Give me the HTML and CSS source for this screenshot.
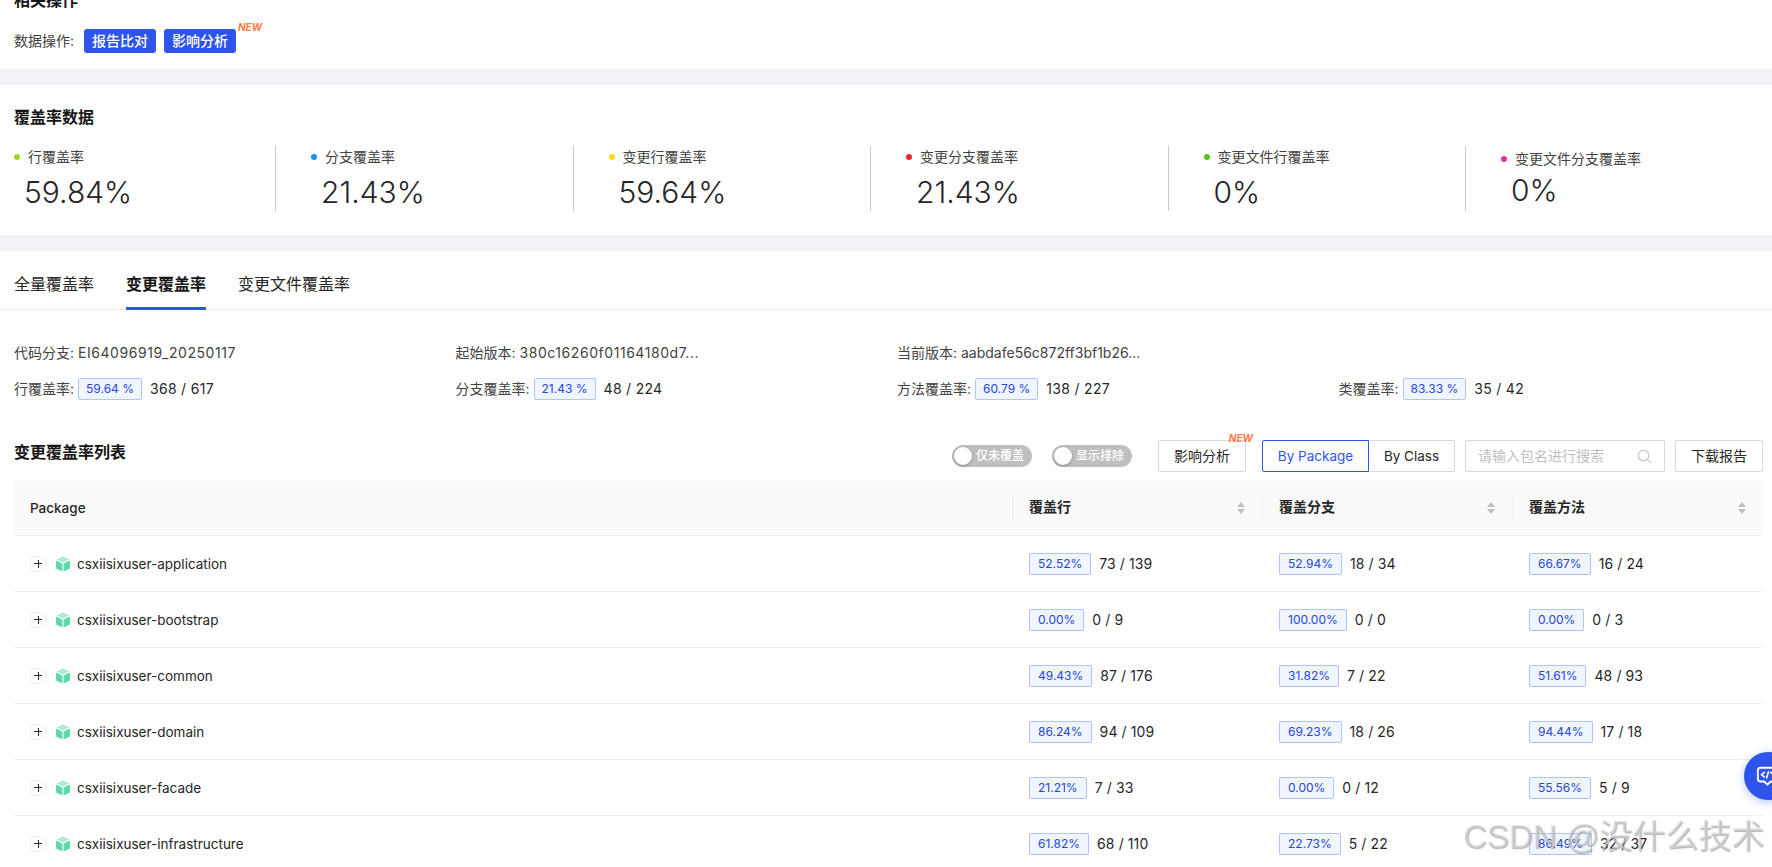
FILE: index.html
```html
<!DOCTYPE html>
<html lang="zh">
<head>
<meta charset="utf-8">
<title>覆盖率报告</title>
<link rel="stylesheet" href="styles.css">
</head>
<body>
<div class="page">
  <section class="panel ops">
    <h3 class="ops-title">相关操作</h3>
    <div class="ops-row">
      <span>数据操作:</span>
      <button class="primary">报告比对</button>
      <button class="primary new-host">影响分析<i class="new">NEW</i></button>
    </div>
  </section>
  <section class="panel cov">
    <h3 class="section-title">覆盖率数据</h3>
    <div class="stats">
      <div class="stat"><div class="stat-label"><b class="dot c1"></b>行覆盖率</div><div class="stat-num">59.84%</div></div>
      <div class="stat"><div class="stat-label"><b class="dot c2"></b>分支覆盖率</div><div class="stat-num">21.43%</div></div>
      <div class="stat"><div class="stat-label"><b class="dot c3"></b>变更行覆盖率</div><div class="stat-num">59.64%</div></div>
      <div class="stat"><div class="stat-label"><b class="dot c4"></b>变更分支覆盖率</div><div class="stat-num">21.43%</div></div>
      <div class="stat"><div class="stat-label"><b class="dot c5"></b>变更文件行覆盖率</div><div class="stat-num">0%</div></div>
      <div class="stat stat-last"><div class="stat-label"><b class="dot c6"></b>变更文件分支覆盖率</div><div class="stat-num">0%</div></div>
    </div>
  </section>
  <section class="panel detail">
    <nav class="tabs">
      <a>全量覆盖率</a>
      <a class="active">变更覆盖率</a>
      <a>变更文件覆盖率</a>
    </nav>
    <div class="info">
      <div>代码分支: <span class="val">EI64096919_20250117</span></div>
      <div>起始版本: <span class="val">380c16260f01164180d7...</span></div>
      <div>当前版本: <span class="val-tight">aabdafe56c872ff3bf1b26...</span></div>
      <div></div>
      <div class="info-item">行覆盖率: <span class="tag">59.64 %</span><span class="frac frac-wide">368 / 617</span></div>
      <div class="info-item">分支覆盖率: <span class="tag">21.43 %</span><span class="frac frac-wide">48 / 224</span></div>
      <div class="info-item">方法覆盖率: <span class="tag">60.79 %</span><span class="frac frac-wide">138 / 227</span></div>
      <div class="info-item">类覆盖率: <span class="tag">83.33 %</span><span class="frac frac-wide">35 / 42</span></div>
    </div>
    <div class="toolbar">
      <h3 class="list-title">变更覆盖率列表</h3>
      <div class="toggle"><b></b>仅未覆盖</div>
      <div class="toggle second"><b></b>显示排除</div>
      <button class="plain new-host impact">影响分析<i class="new">NEW</i></button>
      <div class="seg">
        <span class="seg-on">By Package</span><span class="seg-off">By Class</span>
      </div>
      <div class="search">
        <span>请输入包名进行搜索</span>
        <svg viewBox="0 0 16 16" width="15" height="15" fill="none" stroke="#bfbfbf" stroke-width="1.1"><circle cx="7" cy="7" r="5.6"/><path d="M11 11l4 4"/></svg>
      </div>
      <button class="plain download">下载报告</button>
    </div>
    <div class="table">
      <div class="row head">
        <div class="c-name">Package</div>
        <div class="c-val"><span>覆盖行</span><svg class="sort" viewBox="0 0 8 12" width="8" height="12"><path d="M4 0l4 5H0zM4 12L0 7h8z"/></svg></div>
        <div class="c-val"><span>覆盖分支</span><svg class="sort" viewBox="0 0 8 12" width="8" height="12"><path d="M4 0l4 5H0zM4 12L0 7h8z"/></svg></div>
        <div class="c-val"><span>覆盖方法</span><svg class="sort" viewBox="0 0 8 12" width="8" height="12"><path d="M4 0l4 5H0zM4 12L0 7h8z"/></svg></div>
      </div>
      <div class="row">
        <div class="c-name"><span class="plus"></span><svg class="cube" viewBox="0 0 16 16" width="16" height="16"><path class="cube-top" d="M8 .6l6.6 3L8 6.5 1.4 3.6z"/><path class="cube-side" d="M1 4.6l6.4 2.9V15.4L1 12.4zM15 4.6L8.6 7.5v7.9l6.4-3z"/></svg>csxiisixuser-application</div>
        <div class="c-cell"><span class="tag">52.52%</span><span class="frac">73 / 139</span></div>
        <div class="c-cell"><span class="tag">52.94%</span><span class="frac">18 / 34</span></div>
        <div class="c-cell"><span class="tag">66.67%</span><span class="frac">16 / 24</span></div>
      </div>
      <div class="row">
        <div class="c-name"><span class="plus"></span><svg class="cube" viewBox="0 0 16 16" width="16" height="16"><path class="cube-top" d="M8 .6l6.6 3L8 6.5 1.4 3.6z"/><path class="cube-side" d="M1 4.6l6.4 2.9V15.4L1 12.4zM15 4.6L8.6 7.5v7.9l6.4-3z"/></svg>csxiisixuser-bootstrap</div>
        <div class="c-cell"><span class="tag">0.00%</span><span class="frac">0 / 9</span></div>
        <div class="c-cell"><span class="tag">100.00%</span><span class="frac">0 / 0</span></div>
        <div class="c-cell"><span class="tag">0.00%</span><span class="frac">0 / 3</span></div>
      </div>
      <div class="row">
        <div class="c-name"><span class="plus"></span><svg class="cube" viewBox="0 0 16 16" width="16" height="16"><path class="cube-top" d="M8 .6l6.6 3L8 6.5 1.4 3.6z"/><path class="cube-side" d="M1 4.6l6.4 2.9V15.4L1 12.4zM15 4.6L8.6 7.5v7.9l6.4-3z"/></svg>csxiisixuser-common</div>
        <div class="c-cell"><span class="tag">49.43%</span><span class="frac">87 / 176</span></div>
        <div class="c-cell"><span class="tag">31.82%</span><span class="frac">7 / 22</span></div>
        <div class="c-cell"><span class="tag">51.61%</span><span class="frac">48 / 93</span></div>
      </div>
      <div class="row">
        <div class="c-name"><span class="plus"></span><svg class="cube" viewBox="0 0 16 16" width="16" height="16"><path class="cube-top" d="M8 .6l6.6 3L8 6.5 1.4 3.6z"/><path class="cube-side" d="M1 4.6l6.4 2.9V15.4L1 12.4zM15 4.6L8.6 7.5v7.9l6.4-3z"/></svg>csxiisixuser-domain</div>
        <div class="c-cell"><span class="tag">86.24%</span><span class="frac">94 / 109</span></div>
        <div class="c-cell"><span class="tag">69.23%</span><span class="frac">18 / 26</span></div>
        <div class="c-cell"><span class="tag">94.44%</span><span class="frac">17 / 18</span></div>
      </div>
      <div class="row">
        <div class="c-name"><span class="plus"></span><svg class="cube" viewBox="0 0 16 16" width="16" height="16"><path class="cube-top" d="M8 .6l6.6 3L8 6.5 1.4 3.6z"/><path class="cube-side" d="M1 4.6l6.4 2.9V15.4L1 12.4zM15 4.6L8.6 7.5v7.9l6.4-3z"/></svg>csxiisixuser-facade</div>
        <div class="c-cell"><span class="tag">21.21%</span><span class="frac">7 / 33</span></div>
        <div class="c-cell"><span class="tag">0.00%</span><span class="frac">0 / 12</span></div>
        <div class="c-cell"><span class="tag">55.56%</span><span class="frac">5 / 9</span></div>
      </div>
      <div class="row">
        <div class="c-name"><span class="plus"></span><svg class="cube" viewBox="0 0 16 16" width="16" height="16"><path class="cube-top" d="M8 .6l6.6 3L8 6.5 1.4 3.6z"/><path class="cube-side" d="M1 4.6l6.4 2.9V15.4L1 12.4zM15 4.6L8.6 7.5v7.9l6.4-3z"/></svg>csxiisixuser-infrastructure</div>
        <div class="c-cell"><span class="tag">61.82%</span><span class="frac">68 / 110</span></div>
        <div class="c-cell"><span class="tag">22.73%</span><span class="frac">5 / 22</span></div>
        <div class="c-cell"><span class="tag">86.49%</span><span class="frac">32 / 37</span></div>
      </div>
    </div>
  </section>
</div>
<div class="chat">
  <svg viewBox="0 0 24 24" width="22" height="22" fill="none" stroke="#fff" stroke-width="2" stroke-linecap="round" stroke-linejoin="round"><path d="M5 3h14a3 3 0 0 1 3 3v9a3 3 0 0 1-3 3h-3l-3.5 3.5L9 18H5a3 3 0 0 1-3-3V6a3 3 0 0 1 3-3z"/><path stroke-width="1.8" d="M9 8l-3 2.6L9 13M13.6 7.5L11.6 14M16 8l2 2"/></svg>
</div>
<div class="watermark">CSDN @没什么技术</div>
</body>
</html>
```
FILE: styles.css
```css
* { box-sizing: border-box; }
html, body { margin: 0; height: 867px; overflow: hidden; }
body {
  background: #f0f2f5;
  color: #262626;
  font-family: Inter, "Noto Sans CJK SC", sans-serif;
  font-size: 14px;
  line-height: 20px;
  position: relative;
}
button { font: inherit; cursor: pointer; }
h3 { margin: 0; font-size: 16px; line-height: 22px; font-weight: 600; color: #141414; }

.page { display: flex; flex-direction: column; gap: 16px; margin-top: -11px; }
.panel { background: #fff; }

.ops { height: 80px; padding: 0 14px; }
.ops-row { display: flex; align-items: center; margin-top: 18px; height: 24px; color: #434343; }
.ops-row span { width: 70px; }
.primary {
  height: 24px; width: 72px; padding: 0; margin-right: 8px;
  background: #2f54eb; color: #fff; border: 0; border-radius: 3px;
  font-size: 14px; line-height: 24px; font-weight: 500;
}
.new-host { position: relative; }
.new {
  position: absolute; left: 100%; top: -8px; margin-left: 2px;
  color: #ff7a45; font-size: 10px; line-height: 12px; font-weight: 700; font-style: italic;
}

.cov { height: 150px; padding: 21px 14px 0; }
.stats { display: flex; margin-top: 18px; height: 65px; }
.stat { width: 297.5px; flex: none; padding-left: 35px; border-right: 1px solid #c8c8c8; }
.stat:first-child { width: 262px; padding-left: 0; }
.stat-last { border-right: 0; }
.stat-label { display: flex; align-items: center; height: 22px; color: #434343; }
.stat-last .stat-label { margin-top: 2px; }
.dot { width: 6px; height: 6px; border-radius: 50%; margin-right: 8px; flex: none; }
.c1 { background: #a0d911; } .c2 { background: #1890ff; } .c3 { background: #fadb14; }
.c4 { background: #f5222d; } .c5 { background: #52c41a; } .c6 { background: #eb2f96; }
.stat-num { font-size: 30px; line-height: 40px; font-weight: 350; margin: 4px 0 0 10px; color: #262626; }
.stat-last .stat-num { margin-top: 0; }

.detail { padding: 0 9px 0 14px; height: 640px; }
.tabs { display: flex; gap: 32px; height: 59px; margin: 0 -9px 0 -14px; padding: 0 14px; border-bottom: 1px solid #f0f0f0; }
.tabs a { height: 59px; line-height: 66px; font-size: 16px; color: #262626; }
.tabs a.active { font-weight: 600; color: #141414; border-bottom: 3px solid #2f54eb; }

.info { display: grid; grid-template-columns: repeat(4, 441.5px); grid-auto-rows: 22px; row-gap: 14px; margin-top: 32px; color: #434343; align-items: center; }
.val { letter-spacing: .55px; }
.val-tight { letter-spacing: 0; }
.info-item { display: flex; align-items: center; }
.tag {
  display: inline-block; height: 22px; padding: 0 8px;
  background: #f0f5ff; border: 1px solid #adc6ff; border-radius: 2px;
  color: #2447d8; font-size: 12px; line-height: 20px; white-space: nowrap;
}
.info-item .tag { margin-left: 4px; padding: 0 7px; }
.frac { margin-left: 8px; font-size: 14px; letter-spacing: .1px; color: #262626; }
.frac-wide { letter-spacing: .3px; }

.toolbar { display: flex; align-items: center; height: 32px; margin-top: 40px; }
.list-title { width: 938px; padding-bottom: 8px; }
.toggle {
  position: relative; width: 80px; height: 22px; border-radius: 11px;
  background: #bfbfbf; color: #fff; font-size: 12px; line-height: 22px;
  padding-left: 24px; font-weight: 500;
}
.toggle b { position: absolute; left: 2px; top: 2px; width: 18px; height: 18px; border-radius: 50%; background: #fff; box-shadow: 0 1px 3px rgba(0,0,0,.3); }
.toggle.second { margin-left: 20px; }
.plain { height: 32px; background: #fff; border: 1px solid #d9d9d9; border-radius: 2px; color: #262626; font-size: 14px; padding: 0; }
.impact { width: 88px; margin-left: 26px; }
.impact .new { left: auto; right: -8px; top: -9px; margin: 0; }
.seg { display: flex; height: 32px; margin-left: 16px; width: 193px; font-size: 13.5px; }
.seg span { display: flex; align-items: center; justify-content: center; height: 32px; }
.seg-on { width: 107px; color: #2f54eb; border: 1px solid #2f54eb; border-radius: 2px 0 0 2px; }
.seg-off { width: 86px; border: 1px solid #d9d9d9; border-left: 0; border-radius: 0 2px 2px 0; color: #262626; }
.search { display: flex; align-items: center; justify-content: space-between; width: 200px; height: 32px; margin-left: 10px; padding: 0 12px; border: 1px solid #d9d9d9; border-radius: 2px; color: #bfbfbf; }
.download { width: 88px; margin-left: 10px; }

.table { margin-top: 9px; width: 1749px; }
.row { display: grid; grid-template-columns: 998px 250px 250px 251px; height: 56px; border-bottom: 1px solid #f0f0f0; align-items: center; }
.head { height: 55px; background: #fafafa; font-weight: 600; color: #262626; }
.c-name { padding-left: 16px; display: flex; align-items: center; font-size: 13.5px; }
.head .c-name { font-weight: 500; }
.c-val { display: flex; align-items: center; justify-content: space-between; height: 24px; padding: 0 17px 0 16px; border-left: 1px solid #f0f0f0; }
.c-val span { position: relative; top: -1px; }
.sort { fill: #bfbfbf; }
.c-cell { display: flex; align-items: center; padding-left: 17px; }
.plus { position: relative; width: 16px; height: 16px; border: 1px solid #f0f0f0; border-radius: 2px; margin-right: 9px; flex: none; }
.plus::before, .plus::after { content: ""; position: absolute; background: #262626; }
.plus::before { left: 3px; right: 3px; top: 6.5px; height: 1px; }
.plus::after { top: 3px; bottom: 3px; left: 6.5px; width: 1px; }
.cube { margin-right: 6px; flex: none; }
.cube-top { fill: #a5ecd0; }
.cube-side { fill: #5fd9a9; }

.chat {
  position: absolute; left: 1744px; top: 752px; width: 48px; height: 48px; border-radius: 50%;
  background: #2f54eb; box-shadow: 0 2px 8px rgba(47,84,235,.35);
  display: flex; align-items: center; padding-left: 12px;
}
.watermark {
  position: absolute; left: 1463px; top: 817px; font-size: 33px; line-height: 40px; white-space: nowrap;
  font-family: "Liberation Sans", "Noto Sans CJK SC", sans-serif;
  color: rgba(215,215,215,.6); text-shadow: 1px 1px 1px rgba(110,110,110,.5);
}
```
